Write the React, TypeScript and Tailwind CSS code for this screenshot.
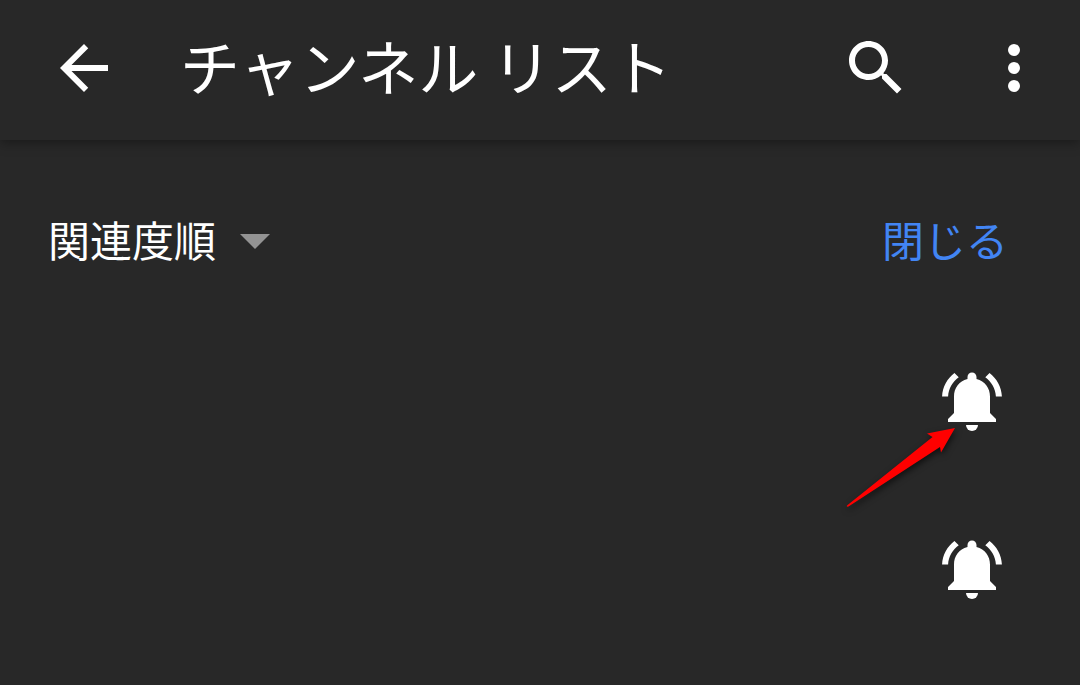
const jp = "font-['Noto_Sans_CJK_JP',sans-serif]";

function BellIcon() {
  return (
    <svg viewBox="0 0 24 24" className="size-18" fill="currentColor" aria-hidden="true">
      <path d="M7.58 4.08L6.15 2.65C3.75 4.48 2.17 7.3 2.03 10.5h2c.15-2.65 1.51-4.97 3.55-6.42zm12.39 6.42h2c-.15-3.2-1.73-6.02-4.12-7.85l-1.42 1.43c2.02 1.45 3.39 3.77 3.54 6.42z" />
      <path d="M18 10.6c0-2.9-1.64-5.2-4.5-5.92V4c0-.83-.67-1.5-1.5-1.5s-1.5.67-1.5 1.5v.68C7.63 5.4 6 7.7 6 10.6V16l-2 2v1h16v-1l-2-2z" />
      <path d="M10 20a2 2 0 0 0 4 0z" />
    </svg>
  );
}

function PointerArrow() {
  return (
    <svg
      viewBox="0 0 110 80"
      className="pointer-events-none absolute top-[110px] right-[124px] z-10 h-20 w-[110px] overflow-visible drop-shadow-[1px_3px_3px_rgba(0,0,0,0.6)]"
      aria-hidden="true"
    >
      <path d="M109 1L81 6.5L86.5 10L1 78.5Q0 80 2.500 79.5L94 20L95 25.5Z" fill="#ff0000" />
    </svg>
  );
}

const channels = [
  { id: 1, marked: true },
  { id: 2, marked: false },
];

export default function App() {
  return (
    <div className={`flex min-h-screen flex-col bg-[#282828] text-white ${jp}`}>
      <header className="flex h-[140px] items-center pr-[30px] pb-1 pl-12 shadow-[0_2px_12px_rgba(0,0,0,0.4)]">
        <button type="button" aria-label="戻る">
          <svg viewBox="0 0 24 24" className="size-18" fill="currentColor" aria-hidden="true">
            <path d="M20 11H7.83l5.59-5.59L12 4l-8 8 8 8 1.41-1.41L7.83 13H20v-2z" />
          </svg>
        </button>
        <h1 className="ml-15 flex-1 pb-1.5 text-[60px] leading-18 whitespace-nowrap">チャンネル リスト</h1>
        <div className="flex gap-[66px]">
          <button type="button" aria-label="検索">
            <svg viewBox="0 0 24 24" className="size-18" fill="currentColor" aria-hidden="true">
              <path d="M15.5 14h-.79l-.28-.27C15.41 12.59 16 11.11 16 9.5 16 5.91 13.09 3 9.5 3S3 5.91 3 9.5 5.91 16 9.5 16c1.61 0 3.09-.59 4.23-1.57l.27.28v.79l5 4.99L20.49 19l-4.99-5zm-6 0C7.01 14 5 11.99 5 9.5S7.01 5 9.5 5 14 7.01 14 9.5 11.99 14 9.5 14z" />
            </svg>
          </button>
          <button type="button" aria-label="その他のオプション">
            <svg viewBox="0 0 24 24" className="size-18" fill="currentColor" aria-hidden="true">
              <circle cx="12" cy="6" r="2" />
              <circle cx="12" cy="12" r="2" />
              <circle cx="12" cy="18" r="2" />
            </svg>
          </button>
        </div>
      </header>
      <main className="flex-1 pt-[68px]">
        <div className="flex items-center justify-between pr-18 pl-12 text-[42px] leading-[62px]">
          <button type="button" className="flex items-center gap-6">
            <span className="pb-1">関連度順</span>
            <svg viewBox="0 0 30 15" className="h-[15px] w-[30px]" fill="#939393" aria-hidden="true">
              <path d="M0 0h30L15 15z" />
            </svg>
          </button>
          <button type="button" className="pb-1 text-[#4285f4]">閉じる</button>
        </div>
        <ul className="pt-[43px]">
          {channels.map((channel) => (
            <li key={channel.id} className="relative flex h-42 items-center justify-end pr-18">
              <button type="button" aria-label="通知">
                <BellIcon />
              </button>
              {channel.marked && <PointerArrow />}
            </li>
          ))}
        </ul>
      </main>
    </div>
  );
}
